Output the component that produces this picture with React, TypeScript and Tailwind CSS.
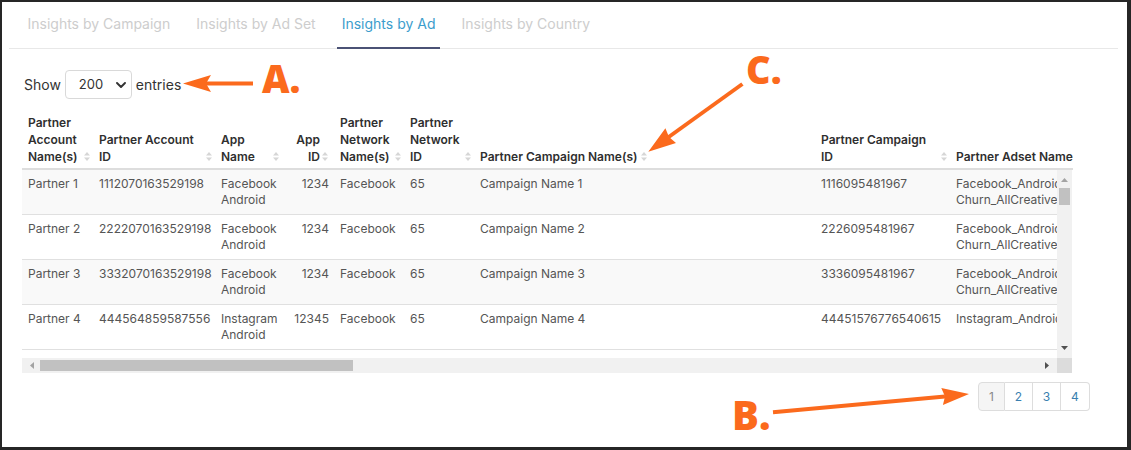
import React from 'react';

const tabs = ['Insights by Campaign', 'Insights by Ad Set', 'Insights by Ad', 'Insights by Country'];

const cols = [71, 122, 67, 52, 70, 70, 341, 135, 260];

type Head = { lines: string[]; right?: boolean; inlineIcon?: boolean; noIcon?: boolean };

const heads: Head[] = [
  { lines: ['Partner', 'Account', 'Name(s)'] },
  { lines: ['Partner Account', 'ID'] },
  { lines: ['App', 'Name'] },
  { lines: ['App', 'ID'], right: true },
  { lines: ['Partner', 'Network', 'Name(s)'] },
  { lines: ['Partner', 'Network', 'ID'] },
  { lines: ['Partner Campaign Name(s)'], inlineIcon: true },
  { lines: ['Partner Campaign', 'ID'] },
  { lines: ['Partner Adset Name(s)'], noIcon: true },
];

const rows: string[][][] = [
  [['Partner 1'], ['1112070163529198'], ['Facebook', 'Android'], ['1234'], ['Facebook'], ['65'], ['Campaign Name 1'], ['1116095481967'], ['Facebook_Android_US_', 'Churn_AllCreatives_Video']],
  [['Partner 2'], ['2222070163529198'], ['Facebook', 'Android'], ['1234'], ['Facebook'], ['65'], ['Campaign Name 2'], ['2226095481967'], ['Facebook_Android_US_', 'Churn_AllCreatives_Video']],
  [['Partner 3'], ['3332070163529198'], ['Facebook', 'Android'], ['1234'], ['Facebook'], ['65'], ['Campaign Name 3'], ['3336095481967'], ['Facebook_Android_US_', 'Churn_AllCreatives_Video']],
  [['Partner 4'], ['444564859587556'], ['Instagram', 'Android'], ['12345'], ['Facebook'], ['65'], ['Campaign Name 4'], ['44451576776540615'], ['Instagram_Android_US_Retargeting']],
];

const SortIcon = () => (
  <svg width="6" height="9" viewBox="0 0 6 9" className="block">
    <path d="M3 0 L6 3.6 L0 3.6 Z" fill="#d6d6d6" />
    <path d="M3 9 L6 5.4 L0 5.4 Z" fill="#d6d6d6" />
  </svg>
);

const Chevron = () => (
  <svg width="10" height="6" viewBox="0 0 10 6" className="block">
    <path d="M1 1 L5 5 L9 1" fill="none" stroke="#333" strokeWidth="1.9" strokeLinecap="round" strokeLinejoin="round" />
  </svg>
);

const Colgroup = () => (
  <colgroup>
    {cols.map((w, i) => (
      <col key={i} style={{ width: w }} />
    ))}
  </colgroup>
);

const Annotations = () => (
  <>
    <svg className="pointer-events-none absolute left-[-2px] top-[-2px]" width="1131" height="450" viewBox="0 0 1131 450">
      <g fill="#fb6a1d" stroke="#fb6a1d">
        {/* A */}
        <line x1="253" y1="83.5" x2="206" y2="83.5" strokeWidth="4" />
        <polygon points="183,83.5 211,75 206,83.5 211,92" strokeWidth="0" />
        {/* B */}
        <line x1="773" y1="412.3" x2="945" y2="396.5" strokeWidth="4" />
        <polygon points="969,394 941.3,388 945,396.5 942.9,405" strokeWidth="0" />
        {/* C */}
        <line x1="742.4" y1="84" x2="668" y2="137.5" strokeWidth="4" />
        <polygon points="648.3,151.7 665.4,128.3 669,137 676,142.9" strokeWidth="0" />
      </g>
    </svg>
    <span className="pointer-events-none absolute left-[260px] top-[57px] font-['Open_Sans',sans-serif] text-[38px] font-extrabold leading-none text-[#fb6a1d]">
      A.
    </span>
    <span className="pointer-events-none absolute left-[730px] top-[393px] font-['Open_Sans',sans-serif] text-[40px] font-extrabold leading-none text-[#fb6a1d]">
      B.
    </span>
    <span className="pointer-events-none absolute left-[744px] top-[48px] font-['Open_Sans',sans-serif] text-[38px] font-extrabold leading-none text-[#fb6a1d]">
      C.
    </span>
  </>
);

export default function App() {
  return (
    <div className="relative h-[450px] w-[1131px] overflow-hidden border-b-[3px] border-l-2 border-r-4 border-t-2 border-[#262626] bg-white font-['Inter',sans-serif]">
      {/* Tabs */}
      <div className="ml-[7px] mr-[9px] flex gap-[16px] border-b border-[#e8e8e8] pl-[13.5px]">
        {tabs.map((t) => (
          <div
            key={t}
            className={
              t === 'Insights by Ad'
                ? '-mb-px border-b-2 border-[#4b5275] px-[5px] pb-[13px] pt-[12px] text-[14px] leading-[20px] text-[#3c9dcc]'
                : '-mb-px border-b-2 border-transparent px-[5px] pb-[13px] pt-[12px] text-[14px] leading-[20px] text-[#cdcdcd]'
            }
          >
            {t}
          </div>
        ))}
      </div>

      <div className="pl-[20px] pr-[37px]">
        {/* Show entries */}
        <div className="mt-[21px] flex items-center gap-[4px] pl-[2px] text-[14px] text-[#333]">
          <span>Show</span>
          <div className="flex h-[29px] w-[67px] items-center justify-between rounded-[4px] border border-[#d9d9d9] pl-[13px] pr-[5px] text-[13px] text-[#333]">
            <span>200</span>
            <Chevron />
          </div>
          <span>entries</span>
        </div>

        {/* Header */}
        <div className="mt-[9px] w-[1051px] overflow-hidden">
          <table className="w-[1188px] table-fixed border-separate border-spacing-0 text-[12px] leading-[17px] text-[#2f2f2f]">
            <Colgroup />
            <thead>
              <tr>
                {heads.map((h, i) => (
                  <th
                    key={i}
                    className={
                      h.right
                        ? 'relative border-b-2 border-[#dddddd] pb-[3px] pl-[6px] pr-[14px] pt-[6px] text-right align-bottom font-semibold'
                        : 'relative border-b-2 border-[#dddddd] pb-[3px] pl-[6px] pr-[6px] pt-[6px] text-left align-bottom font-semibold'
                    }
                  >
                    {h.inlineIcon ? (
                      <div className="flex items-center gap-[4px] whitespace-nowrap">
                        <span>{h.lines[0]}</span>
                        <SortIcon />
                      </div>
                    ) : (
                      h.lines.map((l) => (
                        <div key={l} className="whitespace-nowrap">
                          {l}
                        </div>
                      ))
                    )}
                    {!h.inlineIcon && !h.noIcon && (
                      <span className={h.right ? 'absolute bottom-[7px] right-[6px]' : 'absolute bottom-[7px] right-[3px]'}>
                        <SortIcon />
                      </span>
                    )}
                  </th>
                ))}
              </tr>
            </thead>
          </table>
        </div>

        {/* Body with scrollbars */}
        <div className="flex h-[188px] w-[1050px]">
          <div className="w-[1035px] overflow-hidden">
            <table className="w-[1188px] table-fixed border-separate border-spacing-0 text-[12px] leading-[16px] text-[#555]">
              <Colgroup />
              <tbody>
                {rows.map((r, ri) => (
                  <tr key={ri} className={ri % 2 === 0 ? 'bg-[#f9f9f9]' : 'bg-white'}>
                    {r.map((cell, ci) => (
                      <td
                        key={ci}
                        className={
                          ci === 3
                            ? 'border-b border-[#e0e0e0] pb-[6px] pl-[6px] pr-[5px] pt-[6px] text-right align-top'
                            : 'border-b border-[#e0e0e0] pb-[6px] pl-[6px] pr-[6px] pt-[6px] text-left align-top'
                        }
                      >
                        <div className="h-[32px]">
                          {cell.map((l) => (
                            <div key={l} className="whitespace-nowrap">
                              {l}
                            </div>
                          ))}
                        </div>
                      </td>
                    ))}
                  </tr>
                ))}
              </tbody>
            </table>
          </div>
          <div className="relative w-[15px] bg-[#f1f1f1]">
            <svg className="absolute left-[4px] top-[8px]" width="7" height="4" viewBox="0 0 7 4">
              <path d="M3.5 0 L7 4 L0 4 Z" fill="#a3a3a3" />
            </svg>
            <div className="absolute left-[2px] top-[18px] h-[17px] w-[11px] bg-[#c1c1c1]" />
            <svg className="absolute bottom-[8px] left-[4px]" width="7" height="4" viewBox="0 0 7 4">
              <path d="M0 0 L7 0 L3.5 4 Z" fill="#505050" />
            </svg>
          </div>
        </div>
        <div className="flex h-[15px] w-[1050px]">
          <div className="relative w-[1035px] bg-[#f1f1f1]">
            <svg className="absolute left-[8px] top-[4px]" width="4" height="7" viewBox="0 0 4 7">
              <path d="M0 3.5 L4 0 L4 7 Z" fill="#a3a3a3" />
            </svg>
            <div className="absolute left-[18px] top-[2px] h-[11px] w-[313px] bg-[#c1c1c1]" />
            <svg className="absolute right-[8px] top-[4px]" width="4" height="7" viewBox="0 0 4 7">
              <path d="M4 3.5 L0 0 L0 7 Z" fill="#505050" />
            </svg>
          </div>
          <div className="w-[15px] bg-[#dcdcdc]" />
        </div>

        {/* Pagination */}
        <div className="mt-[9px] flex justify-end">
          <div className="flex h-[29px] text-[12px]">
            {['1', '2', '3', '4'].map((p, i) => (
              <div
                key={p}
                className={
                  i === 0
                    ? 'flex w-[27px] items-center justify-center rounded-l-[4px] border border-[#dddddd] bg-[#f5f5f5] text-[#888]'
                    : i === 3
                      ? 'flex w-[29px] items-center justify-center rounded-r-[4px] border border-l-0 border-[#dddddd] text-[#3a7fb0]'
                      : 'flex w-[28px] items-center justify-center border border-l-0 border-[#dddddd] text-[#3a7fb0]'
                }
              >
                {p}
              </div>
            ))}
          </div>
        </div>
      </div>

      <Annotations />
    </div>
  );
}
